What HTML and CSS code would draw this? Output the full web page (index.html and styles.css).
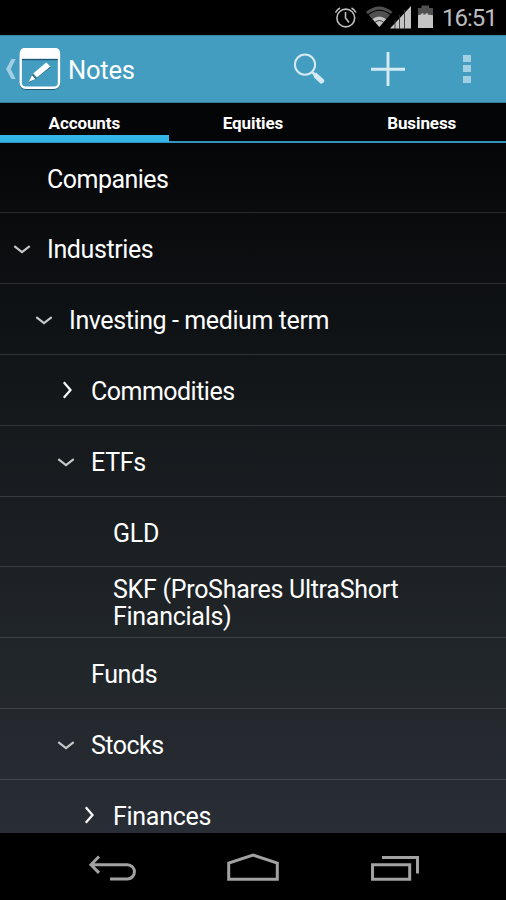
FILE: index.html
```html
<!DOCTYPE html>
<html lang="en">
<head>
<meta charset="utf-8">
<title>Notes</title>
<link rel="stylesheet" href="styles.css">
</head>
<body>
<div class="phone">
  <div class="status">
    <svg class="status-icons" width="104" height="35" viewBox="332 0 104 35">
      <g fill="none" stroke="#bdbdbd" stroke-width="1.6">
        <circle cx="345.8" cy="18" r="8.9"/>
        <path d="M345.500 12v6l3.500 4.500M335.500 12.500q1.500-3 4.500-4.500M351.500 8q3 1.500 4.500 4.500"/>
      </g>
      <path d="M366 12Q379 1 392.500 12L379.300 27z" fill="#505050"/>
      <path d="M372.500 19q6.600-5 13.600 0L379.300 27z" fill="#c4c4c4"/>
      <path d="M368 14.800q11.500-9 23 0" fill="none" stroke="#000" stroke-width="1.100"/>
      <path d="M375 22.300q4.300-3.500 8.600 0" fill="none" stroke="#000" stroke-width=".7"/>
      <path d="M390 28.500L411 6v22.500z" fill="#c4c4c4"/>
      <path d="M395 20v9M399.500 15v14M404.500 10v19" stroke="#333" stroke-width=".9"/>
      <path d="M418 8h3.500V5.500h7.500V8h4v8h-15z" fill="#505050"/>
      <path d="M418 15.200l3-.7.800-1.200h2l-.8 1.300h2.200l.8-1.300h2l-.5 1.300 5.500.6V28h-15z" fill="#c4c4c4"/>
    </svg>
    <span class="clock">16:51</span>
  </div>

  <header class="actionbar">
    <svg class="brand" width="68" height="66" viewBox="0 36 68 66">
      <path d="M11.500 59h4.200l-5 10 5 10h-4.200L6 69z" fill="#a3cfe2"/>
      <rect x="20.700" y="50.300" width="38.300" height="38.500" rx="5" fill="none" stroke="#235a73" stroke-width="2.200"/>
      <path d="M21 59.500h38" stroke="#235a73" stroke-width="1.500"/>
      <rect x="20.700" y="49.300" width="38.300" height="38.500" rx="5" fill="none" stroke="#fff" stroke-width="2.400"/>
      <path d="M20 58.800V53q0-5 5-5h30q5 0 5 5v5.800z" fill="#fff"/>
      <path d="M46.500 63.300l4.200 4-14.500 11.200-7.200 4.300 3-7.700z" fill="#235a73"/>
      <path d="M46.200 62.600l4.300 3.800-13.600 11.200-3.700-4z" fill="#fff"/>
      <path d="M32 75.300l3.500 3.800-6.800 2.900z" fill="#fff"/>
      <path d="M32.600 74l4 4" stroke="#439dc1" stroke-width="1"/>
    </svg>
    <h1 class="title">Notes</h1>
    <svg class="actions" width="226" height="66" viewBox="280 36 226 66">
      <g fill="none" stroke="#d5eaf3">
        <circle cx="305" cy="64.600" r="10.100" stroke-width="2"/>
        <path d="M312 72l4 3.500" stroke-width="2.500"/>
        <path d="M371 69.200h34M388 52v34" stroke-width="2.900"/>
      </g>
      <path d="M313.200 74.500l3-2 7.800 7.200q1 1.300-.5 2.800-1.500 1.600-3 1l-6.500-6z" fill="#d5eaf3"/>
      <path d="M463 55h8v7h-8zM463 65h8v7h-8zM463 76h8v7h-8z" fill="#a3cfe2"/>
    </svg>
  </header>

  <nav class="tabs">
    <div class="tab active">Accounts</div>
    <div class="tab">Equities</div>
    <div class="tab">Business</div>
  </nav>

  <main class="list">
    <div class="row l0 first"><span class="mark"></span><span class="label tight">Companies</span></div>
    <div class="row l0"><svg class="mark" viewBox="0 0 22 22"><path class="down" d="M3.300 9.200l7.700 6 7.700-6"/></svg><span class="label">Industries</span></div>
    <div class="row l1"><svg class="mark" viewBox="0 0 22 22"><path class="down" d="M3.300 9.200l7.700 6 7.700-6"/></svg><span class="label">Investing - medium term</span></div>
    <div class="row l2"><svg class="mark" viewBox="0 0 22 22"><path class="right" d="M8.800 3.300l6.700 7.700-6.700 7.700"/></svg><span class="label tight">Commodities</span></div>
    <div class="row l2"><svg class="mark" viewBox="0 0 22 22"><path class="down" d="M3.300 9.200l7.700 6 7.700-6"/></svg><span class="label loose">ETFs</span></div>
    <div class="row l3"><span class="mark"></span><span class="label loose">GLD</span></div>
    <div class="row l3"><span class="mark"></span><span class="label loose two">SKF (ProShares UltraShort<br>Financials)</span></div>
    <div class="row l2"><span class="mark"></span><span class="label">Funds</span></div>
    <div class="row l2"><svg class="mark" viewBox="0 0 22 22"><path class="down" d="M3.300 9.200l7.700 6 7.700-6"/></svg><span class="label tight">Stocks</span></div>
    <div class="row l3"><svg class="mark" viewBox="0 0 22 22"><path class="right" d="M8.800 3.300l6.700 7.700-6.700 7.700"/></svg><span class="label loose">Finances</span></div>
  </main>

  <footer class="navbar">
    <svg width="506" height="67" viewBox="0 833 506 67" fill="none" stroke="#a2a2a2" stroke-width="3">
      <path d="M110 879h17.300a7 7 0 0 0 0-14.300H91M99 856.500l-8 8.200 8 8.200"/>
      <path d="M228.700 879.200v-16l24.300-8.200 24.300 8.200v16z"/>
      <path d="M372.500 864.700h37.200v14.500h-37.200zM382 857.500h35.500v16"/>
    </svg>
  </footer>
</div>
</body>
</html>
```

FILE: styles.css
```css
* { box-sizing: border-box; }
body {
  margin: 0;
  background: #000;
  color: #fff;
  font-family: Roboto, "Liberation Sans", sans-serif;
}
svg { display: block; flex: none; }
.phone {
  width: 506px;
  height: 900px;
  display: flex;
  flex-direction: column;
  overflow: hidden;
}
.status {
  flex: none;
  height: 35px;
  display: flex;
  align-items: center;
  justify-content: flex-end;
  padding-right: 10px;
}
.clock {
  width: 54px;
  margin-left: 6px;
  padding-top: 0;
  font-size: 24px;
  line-height: 28px;
  letter-spacing: -1px;
  color: #bdbdbd;
  white-space: nowrap;
}
.actionbar {
  flex: none;
  height: 68px;
  display: flex;
  align-items: center;
  background: #439dc1;
  border-top: 1px solid #3a86a5;
  border-bottom: 1px solid #367b98;
}
.title {
  flex: 1;
  margin: 0;
  padding-top: 2px;
  font-size: 25.5px;
  font-weight: 400;
  line-height: 30px;
  letter-spacing: -0.2px;
}
.tabs {
  flex: none;
  height: 40px;
  display: flex;
  background: #040506;
  border-bottom: 2px solid #3193bd;
}
.tab {
  flex: 1;
  height: 38px;
  padding-top: 9px;
  border-bottom: 0 solid #33b5e5;
  font-size: 17px;
  font-weight: 700;
  line-height: 22px;
  letter-spacing: -0.1px;
  text-align: center;
}
.tab.active {
  height: 39px;
  border-bottom: 7px solid #33b5e8;
}
.list {
  flex: none;
  height: 690px;
  overflow: hidden;
  background: linear-gradient(#050608, #15191c 40%, #21262a 75%, #292d35);
}
.row {
  height: 70.9px;
  display: flex;
  align-items: center;
  border-bottom: 1px solid rgba(255, 255, 255, 0.13);
}
.row.first { height: 70px; }
.l0 { padding-left: 11px; }
.l1 { padding-left: 33px; }
.l2 { padding-left: 55px; }
.l3 { padding-left: 77px; }
.mark {
  flex: none;
  width: 22px;
  height: 22px;
  margin-right: 14px;
}
.down { fill: none; stroke: #c8c8c8; stroke-width: 2.1; }
.right { fill: none; stroke: #f5f5f5; stroke-width: 2.3; }
.label {
  padding-top: 3.4px;
  font-size: 25px;
  line-height: 27px;
  letter-spacing: -0.4px;
  white-space: nowrap;
}
.label.tight { letter-spacing: -0.52px; }
.label.loose { letter-spacing: -0.28px; }
.label.two { padding-top: 1.4px; }
.navbar { flex: none; height: 67px; background: #000; }
```
